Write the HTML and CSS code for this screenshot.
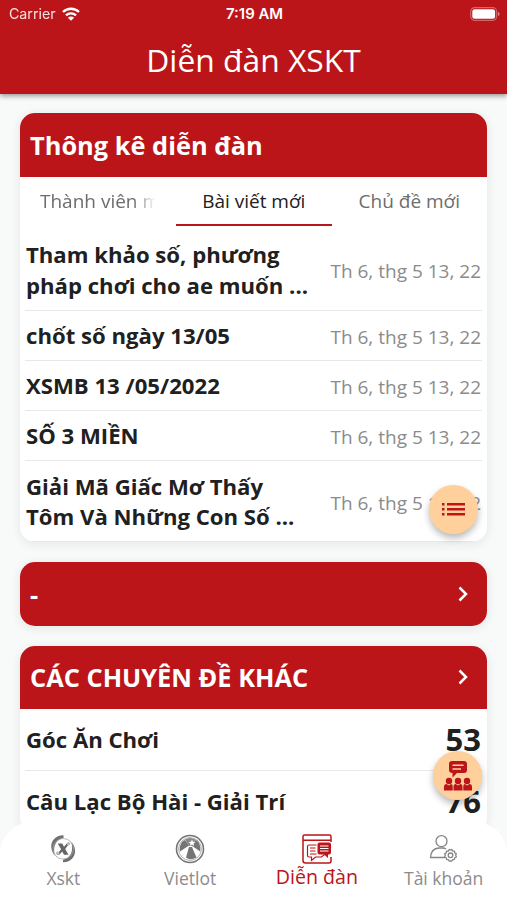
FILE: index.html
```html
<!DOCTYPE html>
<html lang="vi">
<head>
  <meta charset="UTF-8">
  <meta name="viewport" content="width=device-width, initial-scale=1">
  <title>Diễn đàn XSKT</title>
  <link rel="stylesheet" href="styles.css">
</head>
<body>
  <div class="screen">

    <!-- Header with status bar -->
    <header class="header">
      <div class="status-bar">
        <div class="carrier">
          <span>Carrier</span>
          <svg class="wifi" viewBox="0 0 18 14">
            <path d="M1 5a11.5 11.5 0 0 1 16 0M4 8.300a7.200 7.200 0 0 1 10 0" fill="none" stroke="#fff" stroke-width="2.300"/>
            <path d="M9 13.800L5.900 10.700a4.400 4.400 0 0 1 6.200 0z" fill="#fff"/>
          </svg>
        </div>
        <div class="time">7:19 AM</div>
        <div class="battery">
          <svg viewBox="0 0 30 14">
            <rect x=".7" y=".7" width="26" height="12.600" rx="4" fill="none" stroke="#fff" stroke-opacity=".35" stroke-width="1.200"/>
            <rect x="2.300" y="2.300" width="22.800" height="9.400" rx="2.500" fill="#fff"/>
            <path d="M28 5v4q1.600-.6 1.600-2T28 5z" fill="#fff" fill-opacity=".5"/>
          </svg>
        </div>
      </div>
      <h1 class="title">Diễn đàn XSKT</h1>
    </header>

    <main class="content">
      <!-- Forum statistics -->
      <section class="card">
        <div class="card-head">Thông kê diễn đàn</div>
        <div class="tabs">
          <div class="tab"><span class="tab-fade">Thành viên mới</span></div>
          <div class="tab active"><span>Bài viết mới</span></div>
          <div class="tab"><span>Chủ đề mới</span></div>
        </div>
        <div class="list">
          <div class="row">
            <div class="row-title">Tham khảo số, phương<br>pháp chơi cho ae muốn ...</div>
            <div class="row-date">Th 6, thg 5 13, 22</div>
          </div>
          <div class="row">
            <div class="row-title">chốt số ngày 13/05</div>
            <div class="row-date">Th 6, thg 5 13, 22</div>
          </div>
          <div class="row">
            <div class="row-title">XSMB 13 /05/2022</div>
            <div class="row-date">Th 6, thg 5 13, 22</div>
          </div>
          <div class="row">
            <div class="row-title">SỐ 3 MIỀN</div>
            <div class="row-date">Th 6, thg 5 13, 22</div>
          </div>
          <div class="row">
            <div class="row-title">Giải Mã Giấc Mơ Thấy<br>Tôm Và Những Con Số ...</div>
            <div class="row-date">Th 6, thg 5 13, 22</div>
          </div>
        </div>
      </section>

      <section class="card">
        <div class="card-head">
          <span>-</span>
          <svg class="chevron" viewBox="0 0 10 16"><path d="M1.500 1.500L8 8l-6.500 6.500"/></svg>
        </div>
      </section>

      <!-- Other topics -->
      <section class="card">
        <div class="card-head">
          <span>CÁC CHUYÊN ĐỀ KHÁC</span>
          <svg class="chevron" viewBox="0 0 10 16"><path d="M1.500 1.500L8 8l-6.500 6.500"/></svg>
        </div>
        <div class="topics">
          <div class="row topic">
            <div class="row-title">Góc Ăn Chơi</div>
            <div class="row-count">53</div>
          </div>
          <div class="row topic">
            <div class="row-title">Câu Lạc Bộ Hài - Giải Trí</div>
            <div class="row-count">76</div>
          </div>
        </div>
      </section>
    </main>

    <!-- Floating buttons -->
    <div class="fab fab-list">
      <svg width="24" height="16" viewBox="0 0 24 16" fill="#bb1519">
        <path d="M0 1h2.500v2.500H0zM5 1h18v2.500H5zM0 6h2.500v2.500H0zM5 6h18v2.500H5zM0 11h2.500v2.500H0zM5 11h18v2.500H5z"/>
      </svg>
    </div>
    <div class="fab fab-forum">
      <svg width="28" height="30" viewBox="0 0 28 30">
        <g fill="#bb1519">
          <path d="M8 0h12q3 0 3 3v6q0 3-3 3h-7l-4.500 4.500V12Q5 12 5 9V3q0-3 3-3z"/>
          <circle cx="5" cy="20" r="3.200"/>
          <circle cx="14" cy="20" r="3.200"/>
          <circle cx="23" cy="20" r="3.200"/>
          <path d="M0 29.500V26q0-3 2.500-3L5 24.500 7 23q1.700 0 1.700 3v3.500zM9.500 29.500V26q0-3 2.200-3l2.300 1.500 2.300-1.500q2.200 0 2.200 3v3.500zM19.300 29.500V26q0-3 1.700-3l2 1.500 2.500-1.500q2.500 0 2.500 3v3.500z"/>
        </g>
        <path d="M8.500 4.300h11M8.500 8h8.500" stroke="#ffcf9c" stroke-width="1.500"/>
      </svg>
    </div>

    <!-- Bottom navigation -->
    <nav class="nav">
      <div class="nav-item">
        <svg width="28" height="30" viewBox="0 0 28 30">
          <path d="M14.500 1.300C7 1 1.500 7 2.300 13.500 2.600 17 4 19.500 6 21.500 3.500 13 6.500 5.500 14.500 4zM14 28.300c7.500.3 12.800-6 12-12.500-.4-3.400-1.800-5.800-3.800-7.800C24.800 16.500 22 24 14 25.700z" fill="#6f6f6f"/>
          <circle cx="14.200" cy="14.800" r="10.300" fill="none" stroke="#a5a5a5" stroke-width=".8"/>
          <path d="M8.700 9.500h4.500l1.800 3.200 2.800-3.200h2.500L16.200 15l3.300 5.700H15l-1.800-3.200-2.900 3.200H7.800l4.300-5.500z" fill="#666"/>
          <g fill="#bbb"><circle cx="19.500" cy="9.800" r="1.700"/><circle cx="8.700" cy="19.300" r="1.700"/></g>
        </svg>
        <span>Xskt</span>
      </div>
      <div class="nav-item">
        <svg width="30" height="30" viewBox="0 0 30 30">
          <circle cx="15" cy="15" r="13.500" fill="#fff" stroke="#757575" stroke-width="1.600"/>
          <circle cx="15" cy="15" r="11.400" fill="none" stroke="#999" stroke-width=".8"/>
          <g fill="#757575">
            <path d="M14 11.500L5 17.500C4 11 7 7 10 6zM16.500 11.500l8.700 6C26 11 23.500 7 20.500 6z"/>
            <path d="M14 13h3l4.500 10.500Q15 27 11 23.500z"/>
            <path d="M10 5.500q5-3 10.500 0L17 12h-3z" fill="#888"/>
          </g>
          <path d="M17 5.500l1 2.300 2.500.1-1.900 1.600.6 2.500-2.200-1.400-2.200 1.400.7-2.500-2-1.600 2.500-.1z" fill="#fff"/>
        </svg>
        <span>Vietlot</span>
      </div>
      <div class="nav-item active">
        <svg width="32" height="30" viewBox="0 0 32 30">
          <g fill="none" stroke="#bb1519" stroke-width="1.500">
            <path d="M30 8V2.500Q30 1 28.500 1h-25Q2 1 2 2.500v24Q2 29 4.500 29H28q2 0 2-2v-4M2 6.300h28"/>
            <path d="M15.500 11H8q-1.500 0-1.500 1.500v9Q6.500 23 8 23h2.500v3.500l4-3.500h6l3-2.500" stroke-width="1.200"/>
            <path d="M9 14h5.500M9 17h5.500M9 20h6.500" stroke-width="1.100"/>
          </g>
          <path d="M18.500 8.500H28q2 0 2 2v8q0 2-2 2h-1V24l-4-3.500h-4.500q-2 0-2-2v-8q0-2 2-2z" fill="#bb1519"/>
          <path d="M19 12h8.500M19 14.500h8.500M19 17h8.500" stroke="#fff" stroke-width="1"/>
        </svg>
        <span>Diễn đàn</span>
      </div>
      <div class="nav-item">
        <svg width="30" height="30" viewBox="0 0 30 30">
          <g fill="none" stroke="#858585" stroke-width="1.300">
            <circle cx="12.500" cy="7.200" r="5.500"/>
            <path d="M17 15q-1.500-1-3-1h-4Q2 14.500 1.500 23.500H16"/>
            <path d="M21.500 15.800l1.200-.3 1 1.500 1.700.1.300 1.700 1.600.9-.6 1.600.6 1.600-1.600.9-.3 1.700-1.700.1-1 1.500-1.200-.3-1.200.3-1-1.500-1.700-.1-.3-1.700-1.600-.9.600-1.600-.6-1.600 1.600-.9.300-1.700 1.700-.1 1-1.500z"/>
            <circle cx="21.500" cy="21.300" r="2.300"/>
          </g>
        </svg>
        <span>Tài khoản</span>
      </div>
    </nav>
  </div>
</body>
</html>
```
FILE: styles.css
```css
:root {
  --red: #bb1519;
  --peach: #ffcf9c;
  --bg: #f8f9f9;
  --text: #202020;
  --muted: #8b8b8b;
  --radius: 15px;
}

* {
  box-sizing: border-box;
  margin: 0;
  padding: 0;
}

body {
  font-family: "Open Sans", "Noto Sans", sans-serif;
  color: var(--text);
  background: var(--bg);
}

.screen {
  position: relative;
  display: flex;
  flex-direction: column;
  width: 100%;
  max-width: 507px;
  height: 900px;
  margin: 0 auto;
  overflow: hidden;
}

/* === Header === */
.header {
  flex: none;
  height: 94px;
  background: var(--red);
  color: #fff;
  box-shadow: 0 2px 5px rgba(0, 0, 0, 0.4);
}
.status-bar {
  display: grid;
  grid-template-columns: 1fr auto 1fr;
  align-items: center;
  height: 27px;
  padding: 0 7px 0 9px;
  font-family: Inter, "Liberation Sans", sans-serif;
  font-size: 14.2px;
}
.carrier {
  display: flex;
  align-items: center;
  gap: 6px;
}
.carrier span {
  opacity: 0.88;
}
.wifi {
  width: 18px;
  height: 14px;
}
.time {
  font-size: 14.9px;
  font-weight: 600;
}
.battery {
  display: flex;
  justify-content: flex-end;
}
.battery svg {
  width: 30px;
  height: 14px;
}
.title {
  font-size: 31.8px;
  font-weight: 400;
  line-height: 66px;
  text-align: center;
}

/* === Cards === */
.content {
  display: flex;
  flex-direction: column;
  gap: 20px;
  padding: 19px 20px;
}
.card {
  flex: none;
  background: #fff;
  border-radius: var(--radius);
  box-shadow: 0 2px 8px 2px rgba(0, 0, 0, 0.06);
  overflow: hidden;
}
.card-head {
  display: flex;
  align-items: center;
  justify-content: space-between;
  height: 63.5px;
  padding: 0 19px 0 10px;
  background: var(--red);
  color: #fff;
  font-size: 25.4px;
  font-weight: 700;
}
.chevron {
  width: 10px;
  height: 16px;
  fill: none;
  stroke: #fff;
  stroke-width: 2.5;
}

/* === Tabs === */
.tabs {
  display: grid;
  grid-template-columns: repeat(3, 1fr);
  height: 49px;
}
.tab {
  display: flex;
  align-items: center;
  justify-content: center;
  padding: 2px 20px 0;
  border-bottom: 2.5px solid transparent;
  color: #6d6d6d;
  font-size: 19px;
  white-space: nowrap;
}
.tab.active {
  border-color: var(--red);
  color: var(--text);
}
.tab-fade {
  width: 116px;
  overflow: hidden;
  -webkit-mask-image: linear-gradient(90deg, #000 80%, transparent);
  mask-image: linear-gradient(90deg, #000 80%, transparent);
}

/* === Rows === */
.list {
  padding: 4.5px 5px 0;
}
.topics {
  padding: 0 5px;
}
.row {
  display: flex;
  align-items: center;
  justify-content: space-between;
  padding: 9.3px 1px 9.7px;
  border-bottom: 1px solid #e8e8e8;
}
.row-title {
  font-size: 22.15px;
  font-weight: 700;
  line-height: 30.3px;
  white-space: nowrap;
}
.row-date {
  padding-top: 3px;
  color: var(--muted);
  font-size: 19px;
  white-space: nowrap;
}
.topic {
  height: 62px;
}
.row-count {
  font-size: 31px;
  font-weight: 700;
}

/* === Floating buttons === */
.fab {
  position: absolute;
  display: flex;
  align-items: center;
  justify-content: center;
  width: 49px;
  height: 49px;
  border-radius: 50%;
  background: var(--peach);
  box-shadow: 0 4px 7px rgba(0, 0, 0, 0.28);
}
.fab-list {
  top: 485px;
  right: 29px;
}
.fab-forum {
  top: 751px;
  right: 25px;
}

/* === Bottom navigation === */
.nav {
  position: absolute;
  bottom: 0;
  left: 0;
  display: grid;
  grid-template-columns: repeat(4, 1fr);
  width: 100%;
  height: 78px;
  padding-top: 12px;
  background: #fff;
  border-radius: 32px 32px 0 0;
}
.nav-item {
  display: flex;
  flex-direction: column;
  align-items: center;
  color: var(--muted);
  font-size: 17.5px;
  line-height: 29px;
}
.nav-item.active {
  color: var(--red);
  font-size: 19.6px;
  line-height: 26px;
}
```
